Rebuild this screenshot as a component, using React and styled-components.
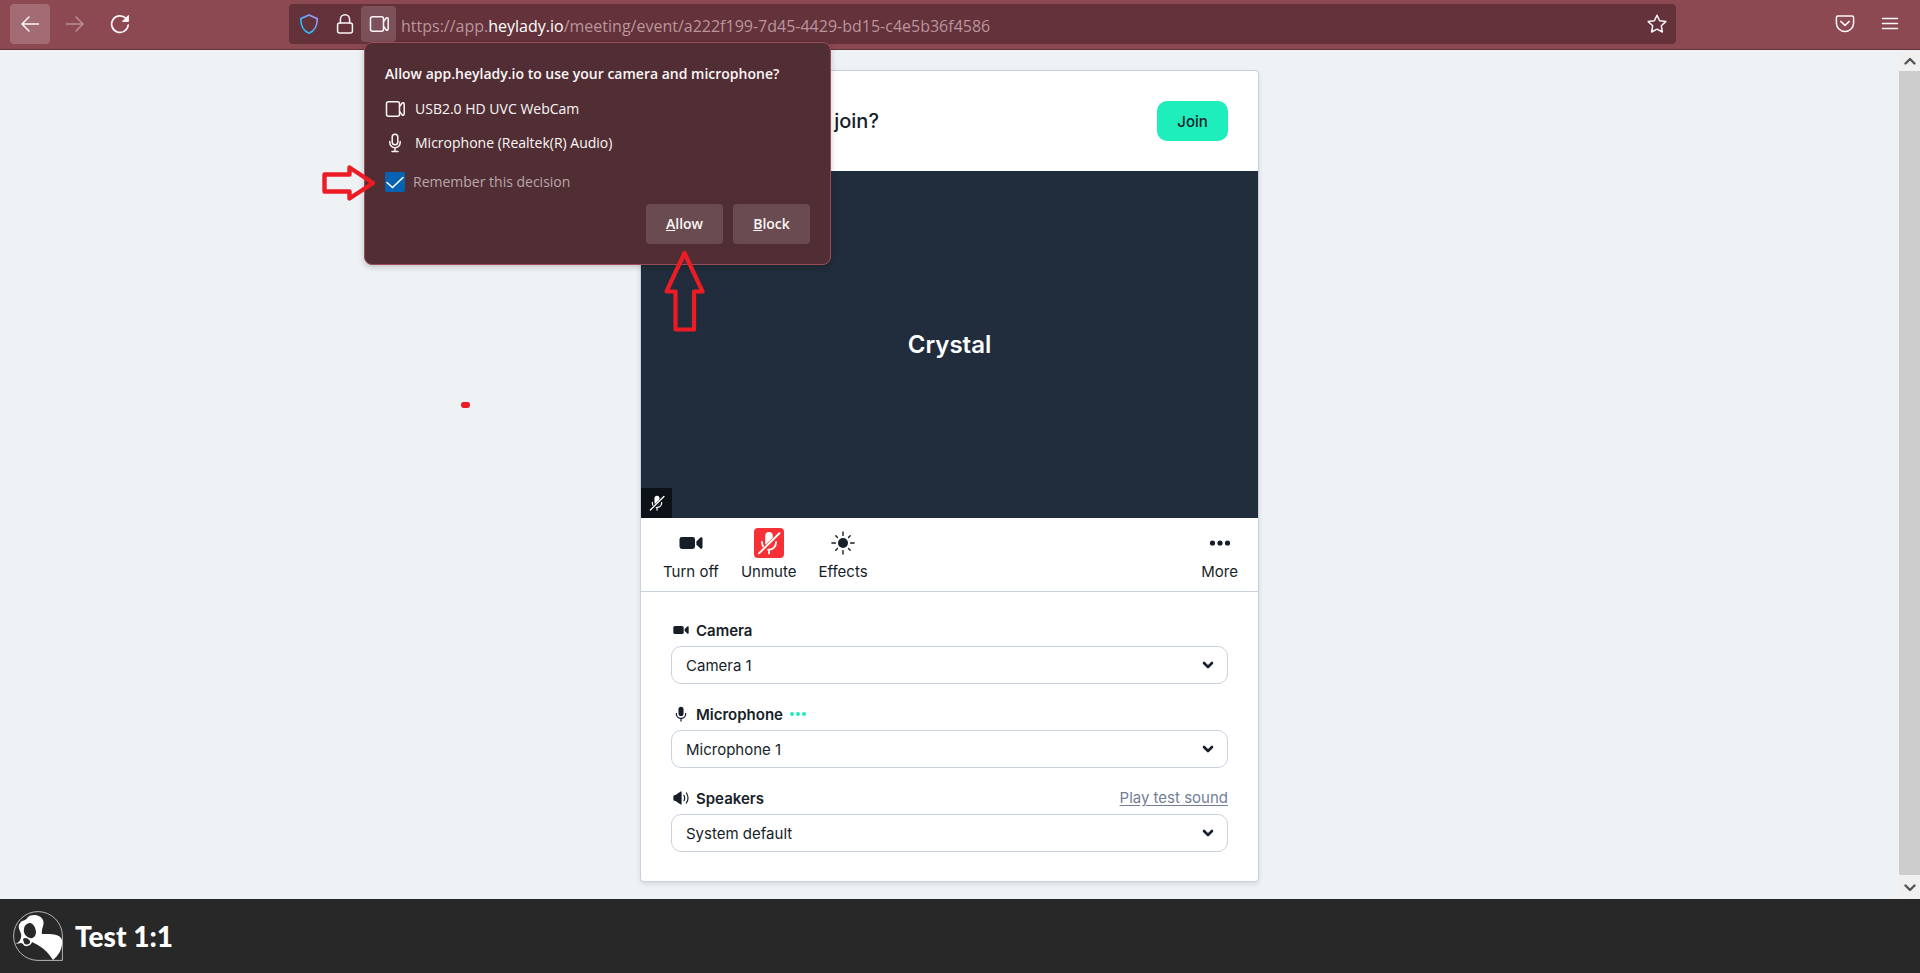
import styled, { createGlobalStyle } from 'styled-components';

const GlobalStyle = createGlobalStyle`
    * {
        box-sizing: border-box;
    }
    body {
        margin: 0;
        background: #eef2f5;
    }
    button, select, input {
        font: inherit;
        color: inherit;
        margin: 0;
    }
    svg {
        display: block;
        flex: none;
    }
`

const Page = styled.div`
    position: relative;
    display: flex;
    flex-direction: column;
    min-height: 100vh;
    font-family: Inter, "Liberation Sans", sans-serif;
    color: #161e28;
`

/* browser bar */

const BrowserBar = styled.header`
    display: flex;
    align-items: center;
    height: 50px;
    padding: 0 10px 2px;
    background: #8c4952;
    border-bottom: 1px solid #64323b;
    font-family: "Open Sans", "Noto Sans", sans-serif;
    color: #fbf6f7;
`

const NavButtons = styled.nav`
    display: flex;
    gap: 5px;
    flex: 0 0 279px;
`

const NavButton = styled.button`
    display: grid;
    place-items: center;
    width: 40px;
    height: 40px;
    padding: 0;
    border: 0;
    border-radius: 4px;
    background: ${props => props.$active ? '#a36b74' : 'transparent'};
    opacity: ${props => props.disabled ? 0.4 : 1};
`

const UrlBar = styled.div`
    display: flex;
    align-items: center;
    flex: 1;
    height: 40px;
    padding-right: 6px;
    border-radius: 4px;
    background: #64323b;
`

const UrlIcon = styled.button`
    display: grid;
    place-items: center;
    width: ${props => props.$width}px;
    height: 36px;
    padding: 0;
    border: 0;
    border-radius: 4px;
    background: ${props => props.$active ? '#7d5159' : 'transparent'};
`

const UrlText = styled.span`
    flex: 1;
    padding: 4px 0 0 5px;
    font-size: 16px;
    line-height: 24px;
    color: #b9969c;
    white-space: nowrap;

    b {
        font-weight: 400;
        color: #fff;
    }
`

const MenuButtons = styled.div`
    display: flex;
    gap: 5px;
    justify-content: flex-end;
    flex: 0 0 234px;
`

/* permission popup */

const PopupAnchor = styled.div`
    position: relative;
    align-self: flex-start;
    width: 35px;
    margin-top: 2px;
`

const Popup = styled.section`
    position: absolute;
    top: 36px;
    left: 3px;
    z-index: 2;
    width: 467px;
    padding: 19px 20px 20px;
    border: 1px solid #9c4b58;
    border-radius: 8px;
    background: #512e34;
    box-shadow: 0 2px 6px rgba(0, 0, 0, 0.2);
    font-size: 14px;
    line-height: 22px;
`

const PopupTitle = styled.h1`
    margin: 0 0 6px;
    font-size: 14px;
    line-height: 24px;
    font-weight: 600;
    white-space: nowrap;
`

const Device = styled.div`
    display: flex;
    align-items: center;
    gap: 10px;
    height: 34px;
`

const Remember = styled.label`
    display: flex;
    align-items: center;
    gap: 8px;
    margin-top: 11px;
    color: #b9a8ab;
`

const CheckBox = styled.span`
    display: grid;
    width: 20px;
    height: 20px;

    input, svg {
        grid-area: 1 / 1;
    }
    input {
        appearance: none;
        width: 20px;
        height: 20px;
        border-radius: 2px;
        background: #0763b1;
    }
    svg {
        pointer-events: none;
    }
`

const PopupActions = styled.div`
    display: flex;
    justify-content: flex-end;
    gap: 10px;
    margin-top: 11px;
`

const PopupButton = styled.button`
    width: 77px;
    height: 40px;
    padding: 0;
    border: 0;
    border-radius: 4px;
    background: #694b50;
    font-weight: 600;
`

const Mark = styled.svg`
    position: absolute;
    z-index: 3;
    left: ${props => props.$left}px;
    top: ${props => props.$top}px;
    pointer-events: none;
`

/* page content */

const Content = styled.div`
    display: flex;
    flex: 1;
`

const Main = styled.main`
    display: flex;
    justify-content: center;
    align-items: flex-start;
    flex: 1;
    padding: 20px 0 17px;
    background: #eef2f5;
`

const ScrollBar = styled.div`
    display: flex;
    flex-direction: column;
    width: 21px;
    background: #f0f0f0;
`

const ScrollArrow = styled.span`
    display: grid;
    place-items: center;
    height: ${props => props.$height}px;
`

const ScrollThumb = styled.span`
    flex: 1;
    background: #cdcdcd;
`

const Card = styled.div`
    width: 619px;
    border: 1px solid #c9d1de;
    border-radius: 4px;
    background: #fff;
    box-shadow: 0 2px 5px rgba(0, 0, 0, 0.1);
`

const CardHeader = styled.div`
    display: flex;
    align-items: center;
    justify-content: space-between;
    height: 100px;
    padding: 0 30px;
`

const CardTitle = styled.h2`
    margin: 0;
    font-size: 20px;
    line-height: 28px;
    font-weight: 500;
`

const JoinButton = styled.button`
    width: 71px;
    height: 40px;
    padding: 0;
    border: 0;
    border-radius: 10px;
    background: #1deebc;
    font-size: 15px;
    font-weight: 500;
`

const Video = styled.div`
    display: grid;
    place-items: center;
    height: 347px;
    background: #212d3c;
    color: #fff;
    font-size: 24px;
    line-height: 32px;
    font-weight: 600;

    > * {
        grid-area: 1 / 1;
    }
`

const MutedBadge = styled.span`
    display: grid;
    place-items: center;
    place-self: end start;
    width: 31px;
    height: 30px;
    background: #0d1218;
`

const Controls = styled.div`
    display: flex;
    gap: 22px;
    height: 74px;
    padding: 10px 20px 0 22px;
    border-bottom: 1px solid #c9d1de;
`

const Control = styled.button`
    display: flex;
    flex-direction: column;
    align-items: center;
    gap: 3px;
    height: 56px;
    padding: 0;
    border: 0;
    background: none;
    font-size: 15px;
    line-height: 22px;
    margin-left: ${props => props.$end ? 'auto' : '0'};
`

const ControlIcon = styled.span`
    display: grid;
    place-items: center;
    width: 30px;
    height: 30px;
    border-radius: 4px;
    background: ${props => props.$muted ? '#f63135' : 'transparent'};
    color: ${props => props.$muted ? '#fff' : 'inherit'};
`

const Settings = styled.div`
    display: flex;
    flex-direction: column;
    gap: 17px;
    padding: 25px 30px 29px;
`

const Field = styled.div`
    display: grid;
    grid-template-columns: 1fr auto;
    row-gap: 3px;
`

const FieldLabel = styled.label`
    display: flex;
    align-items: center;
    gap: 5px;
    height: 26px;
    font-size: 15px;
    font-weight: 600;
`

const FieldIcon = styled.span`
    display: grid;
    place-items: center;
    width: 20px;
`

const TestLink = styled.a`
    align-self: center;
    font-size: 15px;
    line-height: 22px;
    color: #718096;
    text-underline-offset: 2px;
`

const SelectBox = styled.div`
    grid-column: 1 / -1;
    display: grid;
    align-items: center;

    select, svg {
        grid-area: 1 / 1;
    }
    select {
        appearance: none;
        width: 100%;
        height: 38px;
        padding: 0 14px;
        border: 1px solid #c9d1de;
        border-radius: 10px;
        background: #fff;
        font-size: 15px;
    }
    svg {
        justify-self: end;
        margin-right: 14px;
        pointer-events: none;
    }
`

/* footer */

const Footer = styled.footer`
    display: flex;
    align-items: center;
    gap: 12px;
    height: 74px;
    padding: 0 13px;
    background: #282828;
    color: #fff;
    font-family: Lato, sans-serif;
    font-size: 28px;
    line-height: 36px;
    font-weight: 900;
`

function Icon({ width = 20, height = 20, stroke = 'currentColor', weight = 1.5, children }){
    return (
        <svg width={width} height={height} viewBox={`0 0 ${width} ${height}`} fill='none' stroke={stroke}
            strokeWidth={weight} strokeLinecap='round' strokeLinejoin='round' aria-hidden='true'>
            {children}
        </svg>
    )
}

function CameraOutline(){
    return (
        <Icon>
            <rect x='1.5' y='2.8' width='13' height='14.4' rx='2'/>
            <path d='M14.5 7.6L17.2 4Q19.2 3.4 19.2 5.2V14.8Q19.2 16.6 17.2 16L14.5 12.4'/>
        </Icon>
    )
}

function MicOutline(){
    return (
        <Icon>
            <rect x='7.2' y='1.2' width='5.6' height='10.6' rx='2.8'/>
            <path d='M4.8 8.5V9.5A5.2 5.2 0 0 0 15.2 9.5V8.5M10 14.8V18.6M7 18.6H13'/>
        </Icon>
    )
}

function CameraSolid({ width, height }){
    return (
        <svg width={width} height={height} viewBox='0 0 24 14' fill='currentColor' aria-hidden='true'>
            <rect x='0.5' y='1' width='15.5' height='12' rx='2.4'/>
            <path d='M17.4 5.6L21.4 1.6Q23.3 0.6 23.5 2.4V11.6Q23.3 13.4 21.4 12.4L17.4 8.6Z'/>
        </svg>
    )
}

function MicSolid({ size, off }){
    return (
        <svg width={size} height={size} viewBox='0 0 24 24' fill='none' stroke='currentColor' strokeWidth='1.8'
            strokeLinecap='round' aria-hidden='true'>
            <rect x='8.2' y='1' width='7.6' height='14' rx='3.8' fill='currentColor' stroke='none'/>
            <path d='M5 11V11.6A7 7 0 0 0 19 11.6V11M12 18.8V22.6'/>
            {off && <path d='M2.5 23L23 2.8' stroke={off} strokeWidth='4.6'/>}
            {off && <path d='M2 22.4L22.4 2.2' strokeWidth='2'/>}
        </svg>
    )
}

function SpeakerSolid(){
    return (
        <Icon width={16} height={14} weight={1.2}>
            <path d='M1 5L3 4.4L8 1V13L3 9.6L1 9Z' fill='currentColor'/>
            <path d='M11 4.4Q12.4 7 11 9.6M13.4 2Q16.6 7 13.4 12'/>
        </Icon>
    )
}

function Dots({ width, color, r, gap }){
    return (
        <svg width={width} height='8' viewBox={`0 0 ${width} 8`} fill={color} aria-hidden='true'>
            {[-1, 0, 1].map(i => <circle key={i} cx={width / 2 + i * gap} cy='4' r={r}/>)}
        </svg>
    )
}

function Sun(){
    const angles = [0, 45, 90, 135, 180, 225, 270, 315]
    return (
        <Icon width={24} height={24} weight={1.4}>
            <circle cx='12' cy='12' r='5' fill='currentColor' stroke='none'/>
            {angles.map(a => <path key={a} d={a % 90 ? 'M12 4.2V1.8' : 'M12 4.4V0.9'} transform={`rotate(${a} 12 12)`}/>)}
        </Icon>
    )
}

function Logo(){
    return (
        <svg width='50' height='50' viewBox='0 0 50 50' aria-hidden='true'>
            <path d='M25 0.6A24.4 24.4 0 0 0 25 49.4H49.4V25A24.4 24.4 0 0 0 25 0.6Z' fill='none' stroke='#c4c4c4' strokeWidth='0.9'/>
            <path d='M2 33C6 32 9 28 8 23C7 19 4 16 7 12C9 9 13 10 15 6C18 3 27 3 30 9C32 14 28 17 29 23C36 23 47 22 49 29C50 38 45 45 40 49C36 43 32 37 19 31C18 35 12 37 10 33C8 31 6 33 2 33Z' fill='#fff'/>
            <path d='M16 12C20 11 23 17 23 21C23 25 20 28 17 27C13 26 10 22 11 18C11 15 13 13 16 12Z' fill='#282828'/>
            <path d='M10 28C12 26 15 27 17 30C18 33 13 35 11 32Z' fill='#282828'/>
        </svg>
    )
}

const fields = [
    { id: 'camera', label: 'Camera', value: 'Camera 1', icon: <CameraSolid width={16} height={10}/> },
    { id: 'microphone', label: 'Microphone', value: 'Microphone 1', icon: <MicSolid size={16}/>, live: true },
    { id: 'speakers', label: 'Speakers', value: 'System default', icon: <SpeakerSolid/>, link: 'Play test sound' },
]

function PermissionPopup(){
    return (
        <Popup>
            <PopupTitle>Allow app.heylady.io to use your camera and microphone?</PopupTitle>
            <Device><CameraOutline/>USB2.0 HD UVC WebCam</Device>
            <Device><MicOutline/>Microphone (Realtek(R) Audio)</Device>
            <Remember>
                <CheckBox>
                    <input type='checkbox' defaultChecked/>
                    <Icon stroke='#fff' weight={1.6}><path d='M2 10.5L7.5 15.5L18 5.5'/></Icon>
                </CheckBox>
                Remember this decision
            </Remember>
            <PopupActions>
                <PopupButton><u>A</u>llow</PopupButton>
                <PopupButton><u>B</u>lock</PopupButton>
            </PopupActions>
            <Mark $left={-43} $top={120} width='56' height='40' fill='none' stroke='#ed1c24' strokeWidth='4.4'>
                <path d='M2.5 11.5H27.5V4.5L51 20L27.5 35.5V28.5H2.5Z' strokeLinejoin='round'/>
            </Mark>
            <Mark $left={299} $top={207} width='42' height='84' fill='none' stroke='#ed1c24' strokeWidth='4.2'>
                <path d='M20.5 3L38.5 41.5H30V79.5H11.5V41.5H2.5Z' strokeLinejoin='round'/>
            </Mark>
        </Popup>
    )
}

function App(){

    return (
        <Page>
            <GlobalStyle/>
            <BrowserBar>
                <NavButtons>
                    <NavButton $active aria-label='Back'>
                        <Icon><path d='M18.5 10H2M9 3L2 10L9 17'/></Icon>
                    </NavButton>
                    <NavButton disabled aria-label='Forward'>
                        <Icon><path d='M1.5 10H18M11 3L18 10L11 17'/></Icon>
                    </NavButton>
                    <NavButton aria-label='Reload'>
                        <Icon weight={1.7}>
                            <path d='M18.2 11A8.3 8.3 0 1 1 15.8 4.2'/>
                            <path d='M18.4 1.8V7.4H12.8Z' fill='currentColor' strokeWidth='1'/>
                        </Icon>
                    </NavButton>
                </NavButtons>
                <UrlBar>
                    <UrlIcon $width={40} aria-label='Tracking protection'>
                        <Icon stroke='url(#shield)' weight={1.7}>
                            <defs>
                                <linearGradient id='shield' x1='0' y1='1' x2='1' y2='0'>
                                    <stop offset='0.3' stopColor='#2fb8f5'/>
                                    <stop offset='1' stopColor='#b88bf5'/>
                                </linearGradient>
                            </defs>
                            <path d='M10 1L18.2 4.6C18.4 11 15.5 17 10 19.2C4.5 17 1.6 11 1.8 4.6Z'/>
                        </Icon>
                    </UrlIcon>
                    <UrlIcon $width={32} aria-label='Connection secure'>
                        <Icon>
                            <rect x='2.6' y='9' width='14.8' height='10' rx='2'/>
                            <path d='M5.4 9V5.4A4.6 4.6 0 0 1 14.6 5.4V9'/>
                        </Icon>
                    </UrlIcon>
                    <PopupAnchor>
                        <UrlIcon $width={35} $active aria-label='Camera permission'><CameraOutline/></UrlIcon>
                        <PermissionPopup/>
                    </PopupAnchor>
                    <UrlText>https://app.<b>heylady.io</b>/meeting/event/a222f199-7d45-4429-bd15-c4e5b36f4586</UrlText>
                    <UrlIcon $width={26} aria-label='Bookmark'>
                        <Icon><path d='M10 1.2L12.6 6.8L18.8 7.6L14.3 11.8L15.4 18L10 15.2L4.6 18L5.7 11.8L1.2 7.6L7.4 6.8Z'/></Icon>
                    </UrlIcon>
                </UrlBar>
                <MenuButtons>
                    <NavButton aria-label='Pocket'>
                        <Icon>
                            <path d='M3 2H17Q18.6 2 18.6 3.6V9A8.6 8.4 0 0 1 1.4 9V3.6Q1.4 2 3 2Z'/>
                            <path d='M5.8 7.4L10 11.4L14.2 7.4'/>
                        </Icon>
                    </NavButton>
                    <NavButton aria-label='Menu'>
                        <Icon><path d='M2.5 4.5H17.5M2.5 9.5H17.5M2.5 14.5H17.5'/></Icon>
                    </NavButton>
                </MenuButtons>
            </BrowserBar>

            <Content>
                <Main>
                    <Card>
                        <CardHeader>
                            <CardTitle>Are you ready to join?</CardTitle>
                            <JoinButton>Join</JoinButton>
                        </CardHeader>
                        <Video>
                            <span>Crystal</span>
                            <MutedBadge><MicSolid size={16} off='#0d1218'/></MutedBadge>
                        </Video>
                        <Controls>
                            <Control>
                                <ControlIcon><CameraSolid width={24} height={14}/></ControlIcon>
                                Turn off
                            </Control>
                            <Control>
                                <ControlIcon $muted><MicSolid size={24} off='#f63135'/></ControlIcon>
                                Unmute
                            </Control>
                            <Control>
                                <ControlIcon><Sun/></ControlIcon>
                                Effects
                            </Control>
                            <Control $end>
                                <ControlIcon><Dots width={22} color='#161e28' r={2.6} gap={7.5}/></ControlIcon>
                                More
                            </Control>
                        </Controls>
                        <Settings>
                            {fields.map(field => (
                                <Field key={field.id}>
                                    <FieldLabel htmlFor={field.id}>
                                        <FieldIcon>{field.icon}</FieldIcon>
                                        {field.label}
                                        {field.live && <Dots width={20} color='#1deebc' r={2} gap={6}/>}
                                    </FieldLabel>
                                    {field.link && <TestLink href='#test'>{field.link}</TestLink>}
                                    <SelectBox>
                                        <select id={field.id}><option>{field.value}</option></select>
                                        <Icon width={12} height={8} weight={2.6}><path d='M2 2L6 6L10 2'/></Icon>
                                    </SelectBox>
                                </Field>
                            ))}
                        </Settings>
                    </Card>
                </Main>
                <ScrollBar>
                    <ScrollArrow $height={21}>
                        <Icon width={12} height={8} stroke='#555' weight={2.4}><path d='M1.5 6.5L6 2L10.5 6.5'/></Icon>
                    </ScrollArrow>
                    <ScrollThumb/>
                    <ScrollArrow $height={24}>
                        <Icon width={12} height={8} stroke='#555' weight={2.4}><path d='M1.5 2.5L6 7L10.5 2.5'/></Icon>
                    </ScrollArrow>
                </ScrollBar>
            </Content>

            <Footer>
                <Logo/>
                Test 1:1
            </Footer>
            <Mark $left={461} $top={402} width='9' height='6' fill='#ed1c24'>
                <rect width='9' height='6' rx='2.4'/>
            </Mark>
        </Page>
    )
}

export default App;
